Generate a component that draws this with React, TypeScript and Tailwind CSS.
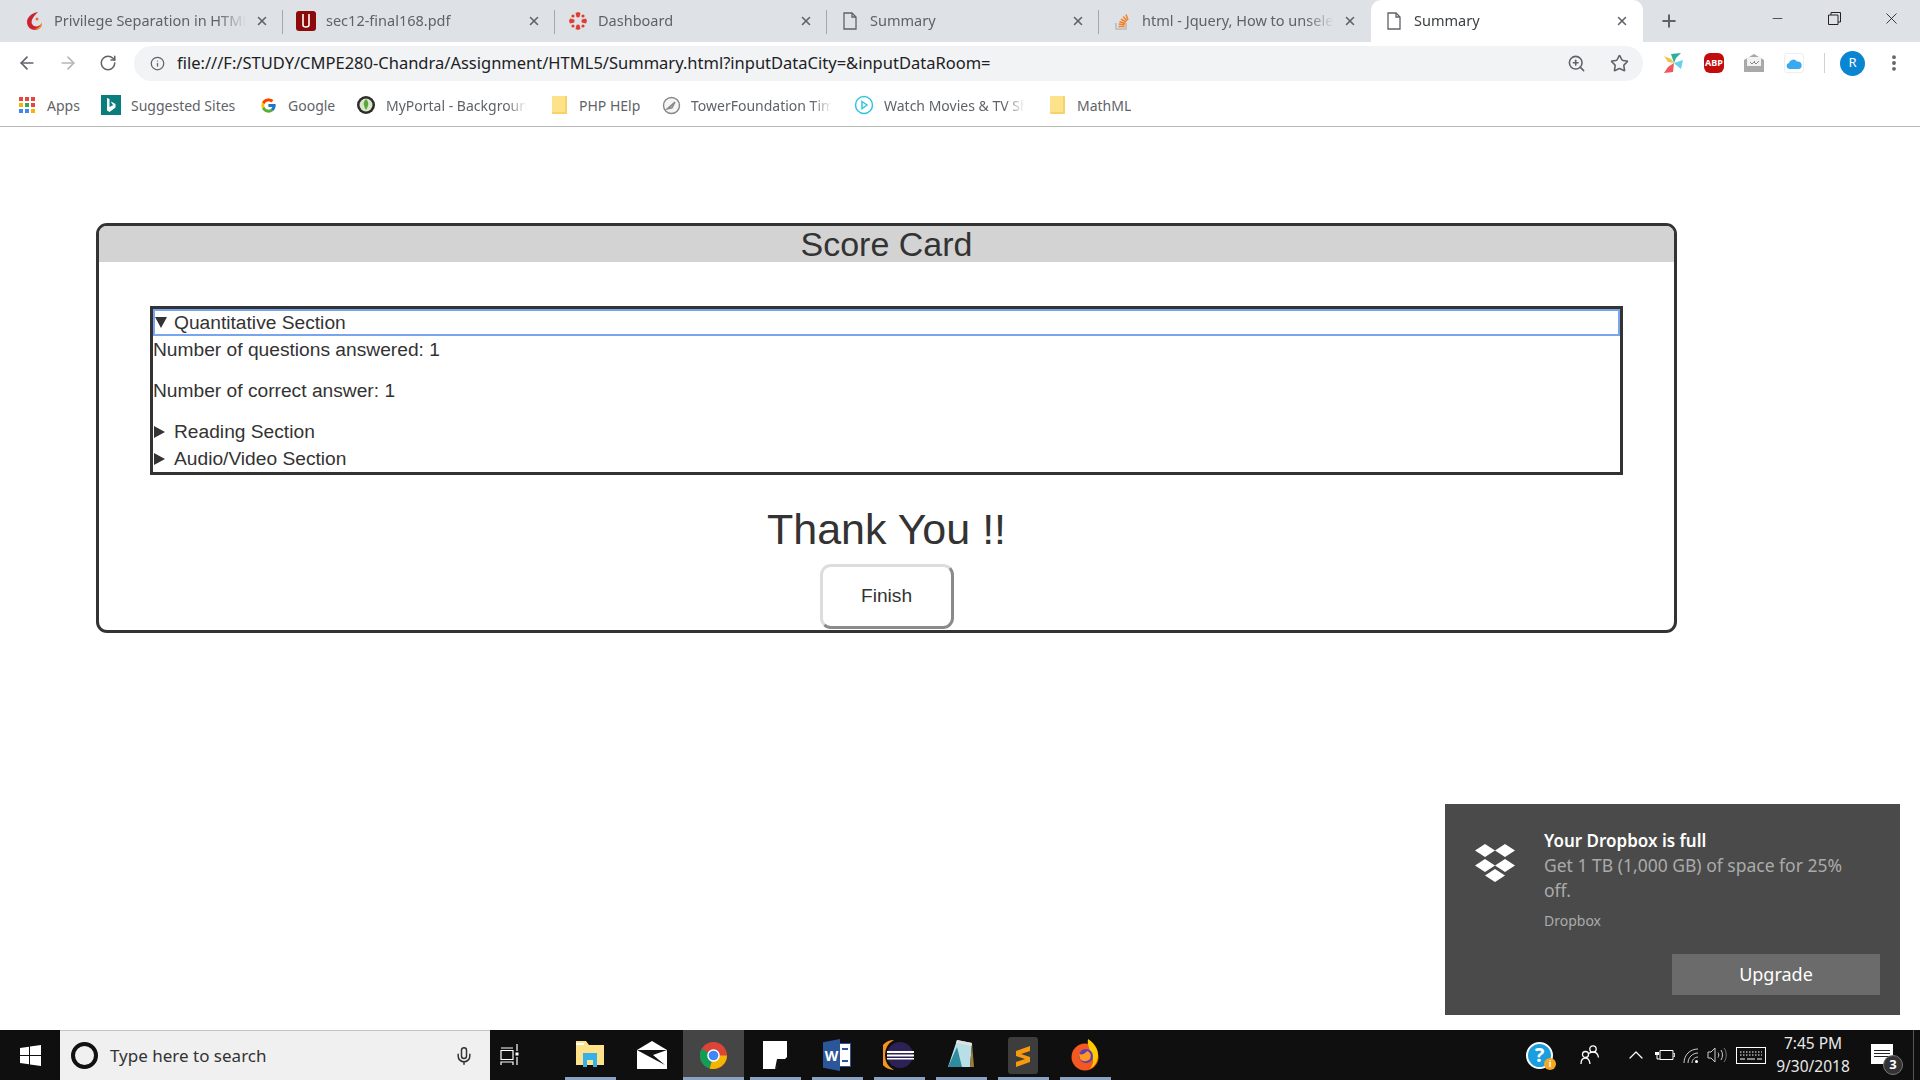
import React from 'react';
import { ArrowLeft, ArrowRight, RotateCw, Info, ZoomIn, Star, X, Plus, Minus, MoreVertical, Mic, ChevronUp } from 'lucide-react';
import { FcGoogle } from 'react-icons/fc';

const ui = 'font-["Noto_Sans","Open_Sans",sans-serif]';

function FileIcon({ className = '' }: { className?: string }) {
  return (
    <svg width="14" height="18" viewBox="0 0 14 18" className={className} fill="none" stroke="#5f6368" strokeWidth="1.3">
      <path d="M1 1h8l4 4v12H1z" />
      <path d="M9 1v4h4" />
    </svg>
  );
}

function PrivIcon() {
  return (
    <svg width="20" height="20" viewBox="0 0 20 20">
      <path d="M14 1C8 2 3 6 3 11c0 5 4 8 8 8 4 0 7-3 7-7-2 3-5 4-8 3-3-2-3-5-1-8 1-2 3-4 5-6z" fill="#c9232f" />
      <path d="M18 11c-1 4-4 7-8 7 3 1 6 0 8-3z" fill="#f0a030" />
      <circle cx="13" cy="8" r="1.5" fill="#f36b2c" />
    </svg>
  );
}

function UIcon() {
  return (
    <div className="w-5 h-5 rounded-[3px] bg-[#8c0a0a] flex items-center justify-center">
      <svg width="10" height="14" viewBox="0 0 10 14" fill="none" stroke="#fff" strokeWidth="1.6"><path d="M2 0v11c0 1 .5 2 3 2s3-1 3-2V0" /></svg>
    </div>
  );
}

function CanvasIcon() {
  return (
    <svg width="20" height="20" viewBox="0 0 20 20" fill="#e13c30">
      <path d="M6.5 10a3 3 0 0 0-.4-1.500L2 7.500 1 10l1 2.500 4.100-1a3 3 0 0 0 .4-1.500zM13.500 10a3 3 0 0 0 .4 1.500l4.100 1 1-2.500-1-2.500-4.100 1a3 3 0 0 0-.4 1.500zM10 6.500a3 3 0 0 0 1.500-.4L12.500 2 10 1 7.500 2l1 4.100a3 3 0 0 0 1.500.4zM10 13.500a3 3 0 0 0-1.500.4L7.500 18l2.500 1 2.500-1-1-4.100a3 3 0 0 0-1.500-.4z" />
      <circle cx="5" cy="5" r="1.600" /><circle cx="15" cy="5" r="1.600" /><circle cx="5" cy="15" r="1.600" /><circle cx="15" cy="15" r="1.600" />
    </svg>
  );
}

function SOIcon() {
  return (
    <svg width="18" height="20" viewBox="0 0 18 20" fill="none">
      <path d="M3 12v6h10v-6" stroke="#bcbbbb" strokeWidth="1.6" />
      <path d="M5.500 15.500h6M5.700 13l6 .8M6.500 10.500l5.600 2M8 8l5 3.200M10.200 5.500l3.800 4.500M13 3.500l2 5.500" stroke="#f48024" strokeWidth="1.5" />
    </svg>
  );
}

function Tab({ icon, title, active, sep = true }: { icon: React.ReactNode; title: string; active?: boolean; sep?: boolean }) {
  return (
    <div className={`relative w-[272px] h-[37px] flex items-center pl-[13px] pr-[14px] ${active ? 'bg-white rounded-t-[10px] h-[42px] mt-[-0px] pt-0' : ''}`}>
      <div className="w-5 h-5 flex items-center justify-center shrink-0">{icon}</div>
      <div className={`ml-[10px] flex-1 whitespace-nowrap overflow-hidden text-[14.5px] ${active ? 'text-[#3c4043]' : 'text-[#5f6368]'} [mask-image:linear-gradient(to_left,transparent,black_28px)]`}>{title}</div>
      <X size={14} strokeWidth={2.6} className="text-[#5f6368] ml-[9px] shrink-0" />
      {sep && <div className="absolute right-0 top-[7px] h-[24px] w-px bg-[#a4a7ab]" />}
    </div>
  );
}

function Bing() {
  return (
    <div className="w-5 h-5 bg-[#0a7d7d] flex items-center justify-center">
      <svg width="10" height="14" viewBox="0 0 10 14" fill="#fff"><path d="M1 0l2.500 1v8l4-2-1.500-1-1-2.500L9.500 6v3.500L3.500 14 1 12.500z" /></svg>
    </div>
  );
}

function Folder() {
  return <div className="w-[15px] h-[18px] bg-[#fde28a] rounded-[1px] border-r-2 border-b-2 border-[#f5d36a]" />;
}

function AppsGrid() {
  const cols = ['#e8453c', '#e8453c', '#e8453c', '#f4b400', '#34a853', '#e8453c', '#4285f4', '#4285f4', '#f4b400'];
  return (
    <div className="grid grid-cols-3 gap-[2px] w-[16px]">
      {cols.map((c, i) => <div key={i} className="w-1 h-1" style={{ background: c }} />)}
    </div>
  );
}

function Bookmark({ w, tw, icon, label }: { w: string; tw?: string; icon: React.ReactNode; label: string }) {
  return (
    <div className={`flex items-center shrink-0 ${w}`}>
      <div className="w-5 h-5 flex items-center justify-center shrink-0">{icon}</div>
      <div className={`ml-[10px] whitespace-nowrap overflow-hidden text-[14px] text-[#5f6368] ${tw ?? ''}`}>{label}</div>
    </div>
  );
}

function Chrome({ size = 30 }: { size?: number }) {
  return (
    <svg width={size} height={size} viewBox="0 0 30 30">
      <circle cx="15" cy="15" r="14" fill="#db4437" />
      <path d="M15 15L2.900 8a14 14 0 0 0 8 20.400z" fill="#0f9d58" />
      <path d="M15 15h14a14 14 0 0 1-18 13.400z" fill="#f4b400" />
      <circle cx="15" cy="15" r="6.500" fill="#fff" />
      <circle cx="15" cy="15" r="5" fill="#4285f4" />
    </svg>
  );
}

function TaskIcon({ w, under = true, active, children }: { w: string; under?: boolean; active?: boolean; children: React.ReactNode }) {
  return (
    <div className={`relative h-full flex items-center justify-center shrink-0 ${w} ${active ? 'bg-[#454545]' : ''}`}>
      {children}
      {under && <div className={`absolute bottom-0 h-[3px] bg-[#8aa3c4] ${active ? 'inset-x-0' : 'inset-x-[5.500px]'}`} />}
    </div>
  );
}

export default function App() {
  return (
    <div className="relative h-screen w-full overflow-hidden bg-white flex flex-col">
      {/* Browser chrome */}
      <header className={`${ui} shrink-0`}>
        <div className="h-[42px] bg-[#dee1e6] flex items-end pl-[11px]">
          <div className="flex items-center h-[42px]">
            <Tab icon={<PrivIcon />} title="Privilege Separation in HTML5" />
            <Tab icon={<UIcon />} title="sec12-final168.pdf" />
            <Tab icon={<CanvasIcon />} title="Dashboard" />
            <Tab icon={<FileIcon />} title="Summary" />
            <Tab icon={<SOIcon />} title="html - Jquery, How to unselect" sep={false} />
            <Tab icon={<FileIcon />} title="Summary" active sep={false} />
          </div>
          <div className="h-[42px] flex items-center ml-[16px]"><Plus size={20} strokeWidth={2.4} className="text-[#5f6368]" /></div>
          <div className="ml-auto flex h-[42px]">
            <div className="w-[57px] h-[36px] flex items-center justify-center"><Minus size={15} strokeWidth={1.2} className="text-[#222]" /></div>
            <div className="w-[57px] h-[36px] flex items-center justify-center">
              <svg width="13" height="13" viewBox="0 0 13 13" fill="none" stroke="#222" strokeWidth="1"><path d="M.5 3h9.500v9.500H.5zM3 3V.5h9.500V10H10" /></svg>
            </div>
            <div className="w-[57px] h-[36px] flex items-center justify-center"><X size={19} strokeWidth={1.1} className="text-[#222]" /></div>
          </div>
        </div>
        <div className="h-[42px] bg-white flex items-center">
          <div className="w-[134px] flex items-center pl-[17px] gap-[21px] text-[#5f6368]">
            <ArrowLeft size={20} strokeWidth={2} />
            <ArrowRight size={20} strokeWidth={2} className="text-[#b4b7ba]" />
            <RotateCw size={18} strokeWidth={2} />
          </div>
          <div className="w-[1509px] h-[35px] bg-[#f1f3f4] rounded-full flex items-center pl-[16px] pr-[14px]">
            <Info size={15} strokeWidth={2} className="text-[#5f6368]" />
            <div className="ml-[12px] flex-1 whitespace-nowrap text-[16.5px] text-[#202124]">file:///F:/STUDY/CMPE280-Chandra/Assignment/HTML5/Summary.html?inputDataCity=&amp;inputDataRoom=</div>
            <ZoomIn size={19} strokeWidth={2} className="text-[#5f6368]" />
            <Star size={19} strokeWidth={2} className="text-[#5f6368] ml-[24px]" />
          </div>
          <div className="flex items-center pl-[21px]">
            <svg width="20" height="20" viewBox="0 0 20 20">
              <path d="M0 3l7 3 3 4-6-1z" fill="#f6c244" />
              <path d="M10 10L7 1l10-1-5 5z" fill="#2bb09a" />
              <path d="M10 10l9-3-2 9-5-4z" fill="#66d0ee" />
              <path d="M10 10l-1 9-9 1 4-6z" fill="#f0555a" />
            </svg>
            <div className="ml-[20px] w-5 h-5 bg-[#c40b0b] rounded-[6px] flex items-center justify-center text-white text-[9px] font-bold">ABP</div>
            <svg width="20" height="18" viewBox="0 0 20 18" className="ml-[20px]">
              <path d="M0 6l10-6 10 6v12H0z" fill="#a9a9a9" />
              <rect x="3" y="3" width="14" height="9" fill="#f2f2f2" />
              <path d="M6 8l2 2 3-3M10 8l2 2 3-3" stroke="#888" fill="none" />
            </svg>
            <div className="ml-[20px] w-5 h-5 rounded-[3px] border border-[#eee] flex items-center justify-center">
              <svg width="16" height="11" viewBox="0 0 16 11"><path d="M3.500 11a3 3 0 0 1-.6-5.900A4.500 4.500 0 0 1 11 3.500 3.800 3.800 0 0 1 12.500 11z" fill="#38a9f0" /></svg>
            </div>
            <div className="ml-[20px] w-px h-5 bg-[#d0d0d0]" />
            <div className="ml-[15px] w-[25px] h-[25px] rounded-full bg-[#0a85d1] text-white text-[13px] flex items-center justify-center">R</div>
            <MoreVertical size={20} strokeWidth={2.6} className="ml-[19px] text-[#5f6368]" />
          </div>
        </div>
        <div className="h-[43px] bg-white border-b border-[#b8b8b8] flex items-center pl-[17px]">
          <Bookmark w="w-[84px]" icon={<AppsGrid />} label="Apps" />
          <Bookmark w="w-[157px]" icon={<Bing />} label="Suggested Sites" />
          <Bookmark w="w-[98px]" icon={<FcGoogle size={17} />} label="Google" />
          <Bookmark w="w-[193px]" tw="w-[141px] [mask-image:linear-gradient(to_left,transparent,black_20px)]" label="MyPortal - Background" icon={
            <svg width="20" height="20" viewBox="0 0 20 20"><circle cx="10" cy="10" r="9" fill="#2c2c2c" /><circle cx="10" cy="10" r="6.500" fill="#d8e8c8" /><path d="M10 4c3 3 3 6 0 11-3-5-3-8 0-11z" fill="#5aa63f" /></svg>
          } />
          <Bookmark w="w-[112px]" icon={<Folder />} label="PHP HElp" />
          <Bookmark w="w-[193px]" tw="w-[141px] [mask-image:linear-gradient(to_left,transparent,black_20px)]" label="TowerFoundation Timesheet" icon={
            <svg width="19" height="19" viewBox="0 0 19 19" fill="none" stroke="#888" strokeWidth="1.4"><circle cx="9.500" cy="9.500" r="8" fill="#f4f4f4" /><path d="M5 13l8-7-3 6z" fill="#aaa" /></svg>
          } />
          <Bookmark w="w-[193px]" tw="w-[141px] [mask-image:linear-gradient(to_left,transparent,black_20px)]" label="Watch Movies & TV Shows" icon={
            <svg width="20" height="20" viewBox="0 0 20 20" fill="none" stroke="#34c6e0" strokeWidth="1.500"><circle cx="10" cy="10" r="8.500" /><path d="M8 6.500l5 3.500-5 3.500z" /></svg>
          } />
          <Bookmark w="w-[100px]" icon={<Folder />} label="MathML" />
        </div>
      </header>

      {/* Page */}
      <main className="flex-1 min-h-0 pl-[96px] pt-[96px] font-['Liberation_Sans',sans-serif] text-[#333]">
        <section className="w-[1581px] h-[410px] border-[3px] border-[#333] rounded-[11px] overflow-hidden">
          <h2 className="h-[36px] bg-[#d3d3d3] text-center text-[34px] leading-[36px]">Score Card</h2>
          <div className="mx-[51px] mt-[44px] h-[169px] border-[3px] border-[#333] text-[19.2px] leading-[27px]">
            <div className="h-[27px] flex items-center outline-2 -outline-offset-2 outline-[#7aa5ee]">
              <svg width="14" height="12" viewBox="0 0 14 12" className="ml-[1px]"><path d="M1 0h12L7 11z" fill="#333" /></svg>
              <span className="ml-[6px]">Quantitative Section</span>
            </div>
            <p className="h-[27px] mb-[14px]">Number of questions answered: 1</p>
            <p className="h-[27px] mb-[14px]">Number of correct answer: 1</p>
            <div className="h-[27px] flex items-center">
              <svg width="12" height="14" viewBox="0 0 12 14" className="ml-[1px]"><path d="M0 1v12l11-6z" fill="#333" /></svg>
              <span className="ml-[8px]">Reading Section</span>
            </div>
            <div className="h-[27px] flex items-center">
              <svg width="12" height="14" viewBox="0 0 12 14" className="ml-[1px]"><path d="M0 1v12l11-6z" fill="#333" /></svg>
              <span className="ml-[8px]">Audio/Video Section</span>
            </div>
          </div>
          <div className="flex flex-col items-center">
            <h1 className="mt-[30px] text-[43px] leading-[48px] h-[48px]">Thank You !!</h1>
            <button className="mt-[11px] w-[134px] h-[65px] rounded-[11px] bg-white text-[19.2px] border-[3px] border-[#ddd] border-r-[#8a8a8a] border-b-[#8a8a8a]">Finish</button>
          </div>
        </section>
      </main>

      {/* Dropbox toast */}
      <aside className={`absolute left-[1445px] top-[804px] w-[455px] h-[211px] bg-[#4a4a4a] ${ui} pl-[99px] pt-[24px]`}>
        <svg width="42" height="38" viewBox="0 0 42 38" fill="#fff" className="absolute left-[29px] top-[40px]">
          <path d="M11 0l10 6.500-10 6.500L1 6.500zM31 0l10 6.500-10 6.500-10-6.500zM11 15l10 6.500-10 6.500-10-6.500zM31 15l10 6.500-10 6.500-10-6.500zM21 25l10 6.500L21 38l-10-6.500z" />
        </svg>
        <div className="text-[17px] leading-[25px] font-semibold text-white">Your Dropbox is full</div>
        <div className="text-[17.5px] leading-[25px] text-[#aaaaaa] w-[320px]">Get 1 TB (1,000 GB) of space for 25% off.</div>
        <div className="mt-[8px] text-[14px] leading-[20px] text-[#aaaaaa]">Dropbox</div>
        <div className="absolute right-[20px] bottom-[20px] w-[208px] h-[41px] bg-[#6b6b6b] text-white text-[18px] flex items-center justify-center">Upgrade</div>
      </aside>

      {/* Taskbar */}
      <footer className={`h-[50px] shrink-0 bg-[#0f0f0f] flex items-center ${ui}`}>
        <div className="w-[60px] h-full flex items-center justify-center">
          <svg width="21" height="21" viewBox="0 0 21 21" fill="#fff"><path d="M0 3l9-1.300V10H0zM10 1.500L21 0v10H10zM0 11h9v8.300L0 18zM10 11h11v10l-11-1.500z" /></svg>
        </div>
        <div className="w-[430px] h-full bg-[#f0f0f0] border-t border-[#c4c4c4] flex items-center pl-[11px] pr-[16px]">
          <div className="w-[27px] h-[27px] rounded-full border-[4px] border-[#111]" />
          <div className="ml-[12px] flex-1 text-[17px] text-[#333]">Type here to search</div>
          <Mic size={20} strokeWidth={1.8} className="text-[#333]" />
        </div>
        <div className="w-[38px] h-full ml-[1px] flex items-center justify-center shrink-0">
          <svg width="20" height="22" viewBox="0 0 20 22" fill="none" stroke="#fff" strokeWidth="1.2"><path d="M1 4h12M1 6.500h12v9H1zM1 21v-3h12v3M17 0v7M17 13v8" /><rect x="15.500" y="8.500" width="3" height="3" fill="#fff" stroke="none" /></svg>
        </div>
        <div className="ml-[30px] flex h-full items-center">
          <TaskIcon w="w-[62px]">
            <svg width="30" height="28" viewBox="0 0 30 28"><path d="M1 0h10l3 4h15v20H1z" fill="#fde28a" /><rect x="1" y="2" width="8" height="2" fill="#fff" /><path d="M8 26V12h14v14h-4v-7h-6v7z" fill="#35b0e8" /></svg>
          </TaskIcon>
          <TaskIcon w="w-[62px]" under={false}>
            <svg width="30" height="28" viewBox="0 0 30 28"><path d="M0 9L15 0l15 9v19H0z" fill="#fff" /><path d="M0 9h30L16 14l12 10-17-9z" fill="#111" /></svg>
          </TaskIcon>
          <TaskIcon w="w-[61px]" active><Chrome size={29} /></TaskIcon>
          <TaskIcon w="w-[62px]">
            <svg width="24" height="28" viewBox="0 0 24 28"><path d="M0 0h24v16L12 28H0z" fill="#fff" /><path d="M14 18h10L12 28z" fill="#111" /></svg>
          </TaskIcon>
          <TaskIcon w="w-[62px]">
            <div className="relative w-[28px] h-[32px]">
              <div className="absolute right-0 top-[4px] w-[26px] h-[24px] bg-white border border-[#2b579a]" />
              <div className="absolute left-0 top-0 w-[17px] h-[32px] bg-[#2b579a] [clip-path:polygon(0_10%,100%_0,100%_100%,0_90%)] flex items-center justify-center text-white text-[14px] font-bold">W</div>
              <div className="absolute right-[3px] top-[9px] w-[6px] h-[14px] border-y-2 border-[#2b579a]" />
            </div>
          </TaskIcon>
          <TaskIcon w="w-[62px]">
            <svg width="32" height="32" viewBox="0 0 32 32">
              <path d="M11 1A15 15 0 0 0 11 31 17 17 0 0 1 11 1z" fill="#f7941e" />
              <circle cx="17" cy="16" r="13" fill="#2c2255" />
              <rect x="4" y="12" width="27" height="2" fill="#fff" /><rect x="4" y="15.500" width="27" height="2" fill="#fff" /><rect x="4" y="19" width="27" height="1.500" fill="#fff" />
            </svg>
          </TaskIcon>
          <TaskIcon w="w-[62px]">
            <svg width="26" height="32" viewBox="0 0 26 32"><path d="M9 1l15 3-2 24-22 0z" fill="#b9dfe6" /><path d="M0 28L9 8l5 20z" fill="#2f8b9f" /><path d="M9 1l15 3v3L8 4z" fill="#e0e0e0" /><path d="M24 4l2 24h-4z" fill="#a07c3b" /></svg>
          </TaskIcon>
          <TaskIcon w="w-[62px]">
            <div className="w-[30px] h-[37px] bg-[#3d3d3d] rounded-[3px] flex items-center justify-center">
              <svg width="16" height="24" viewBox="0 0 16 24" fill="#f79a0c"><path d="M1 8l14-5v5L6 11l9 3v5L1 24v-5l9-3-9-3z" /></svg>
            </div>
          </TaskIcon>
          <TaskIcon w="w-[62px]">
            <svg width="30" height="32" viewBox="0 0 30 32">
              <circle cx="15" cy="18" r="13.500" fill="#f2581f" />
              <path d="M18 0c6 4 10 9 10 16 0 6-3 11-8 14 4-5 4-11 1-15-1-5-4-9-3-15z" fill="#ffcb00" />
              <circle cx="16" cy="17" r="7" fill="#5b3dc0" />
              <path d="M9 15c3 1 6 0 8-3 3 1 5 4 3 8-3 3-7 3-10 0z" fill="#ff9a1f" />
            </svg>
          </TaskIcon>
        </div>
        <div className="ml-auto flex items-center h-full text-white pr-0">
          <div className="relative w-[27px] h-[27px] rounded-full bg-[#1a9ee0] border-[2px] border-white flex items-center justify-center text-[20px] font-bold">
            ?
            <div className="absolute right-[-5px] bottom-[-3px] w-[12px] h-[12px] rounded-full bg-[#f5a623] text-white text-[9px] flex items-center justify-center">i</div>
          </div>
          <svg width="20" height="20" viewBox="0 0 20 20" fill="none" stroke="#fff" strokeWidth="1.3" className="ml-[27px]">
            <circle cx="5.500" cy="9.500" r="3" /><circle cx="13" cy="4" r="3.200" /><path d="M1 19c0-4 2-6 4.500-6s4 2 4.500 6M9 8.500c1-1 2.500-1.500 4-1.500 3 0 5 2 5.500 5.500" />
          </svg>
          <ChevronUp size={24} strokeWidth={1.2} className="ml-[24px]" />
          <svg width="20" height="12" viewBox="0 0 20 12" fill="none" stroke="#fff" strokeWidth="1" className="ml-[7px]">
            <path d="M5 1.500h13v9H5zM18.500 4.500h1.200v3H18.500" /><rect x="0" y="3" width="4" height="3" fill="#fff" stroke="none" /><path d="M2 6v4h3" />
          </svg>
          <svg width="16" height="15" viewBox="0 0 16 15" fill="none" stroke="#ccc" strokeWidth="1" className="ml-[8px]">
            <path d="M1 15C1 7 7 1 15 1M5 15c0-5.500 4.500-10 10-10M9 15c0-3 2.500-6 6-6" /><circle cx="13.500" cy="13.500" r="1.500" fill="#fff" stroke="none" />
          </svg>
          <svg width="20" height="16" viewBox="0 0 20 16" fill="none" stroke="#ddd" strokeWidth="1" className="ml-[8px]">
            <path d="M1 5h3l4-4v14l-4-4H1zM11 5.500c1 1.500 1 3.500 0 5M14 3c2 3 2 7 0 10" stroke="#ccc" /><path d="M17 1c3 4 3 10 0 14" stroke="#777" />
          </svg>
          <svg width="30" height="17" viewBox="0 0 30 17" fill="none" stroke="#fff" className="ml-[9px]">
            <rect x=".5" y=".5" width="29" height="16" /><path d="M4 5h22M4 8h22" strokeDasharray="1.500 1.500" /><path d="M4 12h5M11 12h8M21 12h5" />
          </svg>
          <div className="w-[90px] ml-[2px] text-center text-[15.5px] leading-[23px] text-[#e8e8e8]">
            <div>7:45 PM</div>
            <div>9/30/2018</div>
          </div>
          <div className="relative w-[22px] h-[20px] bg-white ml-[13px] mb-[3px] flex flex-col justify-center gap-[2px] px-[3px]">
            <div className="h-px bg-[#222]" /><div className="h-px bg-[#222]" /><div className="h-px bg-[#222]" />
            <div className="absolute right-[-10px] bottom-[-11px] w-[20px] h-[20px] rounded-full bg-[#333] border border-[#777] text-white text-[13px] font-bold flex items-center justify-center">3</div>
          </div>
          <div className="ml-[20px] w-px h-full bg-[#555]" />
          <div className="w-[6px]" />
        </div>
      </footer>
    </div>
  );
}
